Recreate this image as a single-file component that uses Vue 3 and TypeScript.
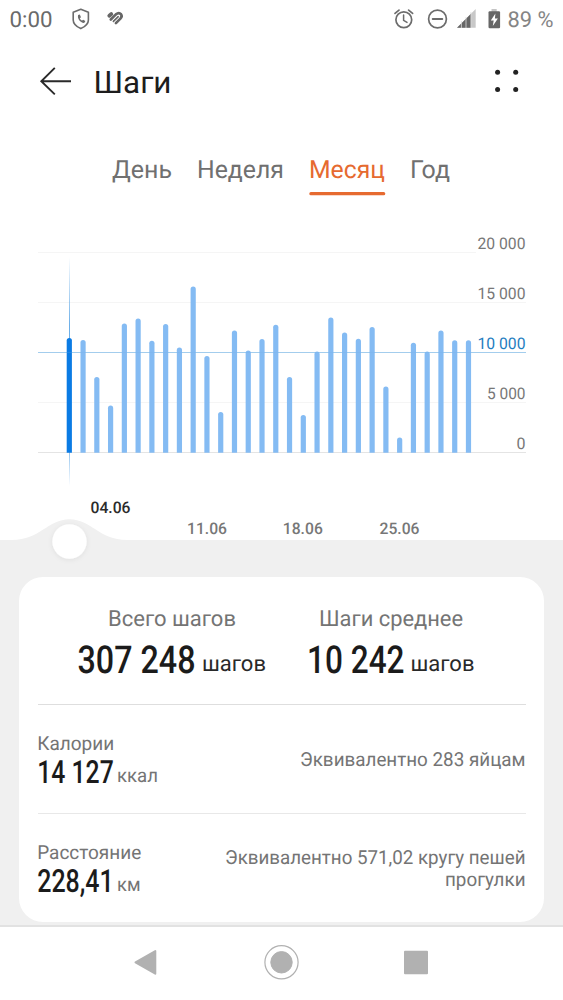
<script setup lang="ts">
interface Tab {
  label: string
  x: number
  width: number
  active?: boolean
}

const tabs: Tab[] = [
  { label: 'День', x: 112, width: 60 },
  { label: 'Неделя', x: 197, width: 87 },
  { label: 'Месяц', x: 309, width: 76, active: true },
  { label: 'Год', x: 410, width: 40 },
]

const steps: number[] = [
  11450, 11250, 7550, 4680, 12900, 13400, 11170, 12840, 10480, 16600,
  9650, 4050, 12200, 10200, 11330, 12770, 7550, 3750, 10080, 13500,
  12000, 11370, 12550, 6580, 1500, 10970, 10080, 12200, 11210, 11210,
]

const baseY = 452.4
const yFor = (value: number): number => baseY - value / 100
const barX = (index: number): number => 69.3 + index * 13.765

const axis = [
  { value: 20000, label: '20 000', width: 48 },
  { value: 15000, label: '15 000', width: 48 },
  { value: 10000, label: '10 000', width: 48, goal: true },
  { value: 5000, label: '5 000', width: 38.5 },
  { value: 0, label: '0', width: 9 },
]

const dates = [
  { label: '11.06', x: 207 },
  { label: '18.06', x: 302.8 },
  { label: '25.06', x: 399.5 },
]

const totals = [
  { title: 'Всего шагов', titleX: 108, titleWidth: 128, value: '307 248', x: 77.5, width: 118, unitX: 202, unitWidth: 64 },
  { title: 'Шаги среднее', titleX: 319, titleWidth: 144, value: '10 242', x: 307, width: 97.5, unitX: 410.5, unitWidth: 64 },
]

const details = [
  { title: 'Калории', titleWidth: 77, value: '14 127', unit: 'ккал', unitWidth: 41, note: [{ text: 'Эквивалентно 283 яйцам', width: 225.5 }] },
  {
    title: 'Расстояние',
    titleWidth: 104,
    value: '228,41',
    unit: 'км',
    unitWidth: 23.5,
    note: [
      { text: 'Эквивалентно 571,02 кругу пешей', width: 300.5 },
      { text: 'прогулки', width: 80.5 },
    ],
  },
]

// Horizontal condensing of the large figures
const totalScale = 0.84
const detailScale = 0.78
</script>

<template>
  <main class="screen">
    <section class="top">
      <div class="status">
        <svg width="563" height="38" viewBox="0 0 563 38">
          <text class="clock" x="9.5" y="27" textLength="43" lengthAdjust="spacingAndGlyphs">0:00</text>
          <path d="M80.8 9.2 L88.4 12.2 V20 C88.4 24 85 26.7 80.8 28.6 C76.6 26.7 73.2 24 73.2 20 V12.2 Z" fill="none" stroke="#6c6c6c" stroke-width="1.6" stroke-linejoin="round" />
          <path d="M78.1 15.1 l1.7 -.5 l1.2 2.6 l-1.2 1 c.5 1.2 1.2 1.9 2.3 2.4 l1.1 -.9 l2.1 1.4 c-.3 1.4 -1 1.9 -2 1.8 c-3.4 -.5 -6.1 -4.3 -5.2 -7.8 z" fill="#6c6c6c" />
          <g fill="none" stroke="#666" stroke-linecap="round" stroke-linejoin="round">
            <path d="M109.3 15.7 L111.3 14.1" stroke-width="3.8" />
            <path d="M110.8 19.5 L115.9 14.4 Q118.9 12 121 14.2 Q122.5 16.2 120.6 18.2 L115.9 23" stroke-width="2.7" />
            <path d="M113.5 21.3 L118.1 16.8" stroke-width="1.9" />
            <path d="M112.4 20.7 L117.4 15.8" stroke="#fff" stroke-width=".8" />
            <path d="M114.3 22.3 L119.3 17.4" stroke="#fff" stroke-width=".8" />
          </g>
          <g fill="none" stroke="#6c6c6c" stroke-width="1.7" stroke-linecap="round">
            <circle cx="403.8" cy="19.8" r="7.9" />
            <path d="M403.6 15 V20.3 L407 22.4" stroke-width="1.5" />
            <path d="M395 13.4 L399 10.1 M412.6 13.4 L408.6 10.1" />
            <circle cx="437.5" cy="19" r="8.9" />
            <path d="M432.7 19 H442.3" stroke-width="1.9" />
          </g>
          <path d="M457 27.7 L475.7 9 V27.7 Z" fill="#c8c8c8" />
          <path d="M457 27.7 L471 13.7 V27.7 Z" fill="#666" />
          <path d="M461.4 21 V28 M466 17 V28 M470.9 12 V28" stroke="#ddd" stroke-width=".8" />
          <path d="M491.5 9 H496.7 V12 H491.5 Z" fill="#c4c4c4" />
          <rect x="488.5" y="11.2" width="11.6" height="17" rx="1.2" fill="#666" />
          <path d="M495.4 13.4 L490.8 20.6 H493.7 L492.8 26 L497.9 18.6 H494.9 Z" fill="#fff" />
          <text class="clock battery" x="507.5" y="27" textLength="46" lengthAdjust="spacingAndGlyphs">89 %</text>
        </svg>
      </div>

      <header class="header">
        <svg width="563" height="90" viewBox="0 38 563 90">
          <path d="M71 81.3 H41.5 M54.8 67.9 L41.3 81.3 L54.8 94.4" fill="none" stroke="#2a2a2a" stroke-width="1.9" />
          <text class="title" x="93.5" y="93" textLength="78" lengthAdjust="spacingAndGlyphs">Шаги</text>
          <g fill="#222">
            <circle cx="497.6" cy="72.3" r="2.5" />
            <circle cx="515.7" cy="72.3" r="2.5" />
            <circle cx="497.6" cy="89.4" r="2.5" />
            <circle cx="515.7" cy="89.4" r="2.5" />
          </g>
        </svg>
      </header>

      <nav class="tabs">
        <svg width="563" height="97" viewBox="0 128 563 97">
          <g v-for="tab in tabs" :key="tab.label">
            <text class="tab" :class="{ active: tab.active }" :x="tab.x" y="178.3" :textLength="tab.width" lengthAdjust="spacingAndGlyphs">{{ tab.label }}</text>
            <rect v-if="tab.active" class="underline" x="309.3" y="192.1" width="76" height="3.2" rx="1.6" />
          </g>
        </svg>
      </nav>
    </section>

    <section class="chart">
      <svg width="563" height="352" viewBox="0 225 563 352">
        <defs>
          <linearGradient id="cursor" gradientUnits="userSpaceOnUse" x1="0" y1="257" x2="0" y2="486">
            <stop offset="0" stop-color="#5ba6e6" stop-opacity="0" />
            <stop offset=".3" stop-color="#5ba6e6" stop-opacity=".9" />
            <stop offset=".82" stop-color="#5ba6e6" stop-opacity=".8" />
            <stop offset="1" stop-color="#5ba6e6" stop-opacity="0" />
          </linearGradient>
          <filter id="knobShadow" x="-50%" y="-50%" width="200%" height="200%">
            <feDropShadow dx="0" dy="1" stdDeviation="2.5" flood-color="#000" flood-opacity=".07" />
          </filter>
        </defs>
        <rect x="0" y="225" width="563" height="315" fill="#fff" />
        <g v-for="tick in axis" :key="tick.value">
          <rect x="37.5" :y="yFor(tick.value) - 0.4" :width="tick.value === 20000 ? 438 : 488" height="1" :class="tick.goal ? 'goal-line' : tick.value === 0 ? 'base-line' : 'grid-line'" shape-rendering="crispEdges" />
          <text class="tick" :class="{ goal: tick.goal }" :x="525.5 - tick.width" :y="yFor(tick.value) - 3.8" :textLength="tick.width" lengthAdjust="spacingAndGlyphs">{{ tick.label }}</text>
        </g>
        <rect x="69" y="257" width="1" height="229" fill="url(#cursor)" />
        <path
          v-for="(value, i) in steps"
          :key="i"
          :class="i === 0 ? 'bar selected' : 'bar'"
          :d="`M${barX(i) - 2.6} ${baseY + 0.3} V${yFor(value) + 2.6} a2.6 2.6 0 0 1 5.2 0 V${baseY + 0.3} Z`"
        />
        <rect x="37.5" y="352" width="488" height="1" class="goal-overlay" shape-rendering="crispEdges" />
        <path d="M12 541 V540 C40 540 48 519.3 69.5 519.3 S99 540 127 540 V541 Z" fill="#f0f0f0" />
        <circle cx="69.5" cy="541.5" r="17.2" fill="#fff" filter="url(#knobShadow)" />
        <text class="date current" x="90.5" y="513.3" textLength="40" lengthAdjust="spacingAndGlyphs">04.06</text>
        <text v-for="date in dates" :key="date.label" class="date" :x="date.x - 20" y="533.5" textLength="40" lengthAdjust="spacingAndGlyphs">{{ date.label }}</text>
      </svg>
    </section>

    <article class="card">
      <div class="summary">
        <svg width="488" height="127" viewBox="38 577 488 127">
          <g v-for="total in totals" :key="total.title">
            <text class="caption" :x="total.titleX" y="626.3" :textLength="total.titleWidth" lengthAdjust="spacingAndGlyphs">{{ total.title }}</text>
            <text class="value" :transform="`translate(${total.x} 672.8) scale(${totalScale} 1)`" :textLength="total.width / totalScale" lengthAdjust="spacingAndGlyphs">{{ total.value }}</text>
            <text class="unit-dark" :x="total.unitX" y="671" :textLength="total.unitWidth" lengthAdjust="spacingAndGlyphs">шагов</text>
          </g>
        </svg>
      </div>
      <div v-for="detail in details" :key="detail.title" class="detail">
        <svg width="488" height="108" viewBox="0 0 488 108">
          <text class="label" x="-.8" y="45" :textLength="detail.titleWidth" lengthAdjust="spacingAndGlyphs">{{ detail.title }}</text>
          <text class="value small" :transform="`translate(-.8 78) scale(${detailScale} 1)`" :textLength="76.5 / detailScale" lengthAdjust="spacingAndGlyphs">{{ detail.value }}</text>
          <text class="label" x="79" y="77" :textLength="detail.unitWidth" lengthAdjust="spacingAndGlyphs">{{ detail.unit }}</text>
          <text
            v-for="(line, i) in detail.note"
            :key="line.text"
            class="note"
            :x="487.5 - line.width"
            :y="(detail.note.length > 1 ? 50.2 : 61.2) + i * 22"
            :textLength="line.width"
            lengthAdjust="spacingAndGlyphs"
          >{{ line.text }}</text>
        </svg>
      </div>
    </article>

    <footer class="navigation">
      <svg width="563" height="73" viewBox="0 927 563 73">
        <g fill="#b1b1b1" stroke="#b1b1b1" stroke-linejoin="round">
          <path d="M135.5 962.3 L155.3 951 V973.7 Z" stroke-width="2" />
          <circle cx="281.5" cy="962.3" r="10.7" />
          <circle cx="281.5" cy="962.3" r="16.6" fill="none" stroke-width="1.2" />
          <rect x="405" y="951.7" width="22" height="21.6" stroke-width="2" />
        </g>
      </svg>
    </footer>
  </main>
</template>

<style>
body {
  background: #fff;
}
</style>

<style scoped>
.screen {
  display: flex;
  flex-direction: column;
  width: 563px;
  height: 1000px;
  overflow: hidden;
  background: #f0f0f0;
  font-family: Roboto, "Noto Sans", sans-serif;
}

svg {
  display: block;
  overflow: visible;
}

text {
  font-family: Roboto, "Noto Sans", sans-serif;
  text-rendering: geometricPrecision;
}

.top {
  height: 225px;
  background: #fff;
}

.chart {
  height: 352px;
}

.clock {
  font-size: 22px;
  fill: #6a6a6a;
}

.battery {
  fill: #858585;
}

.title {
  font-size: 31px;
  fill: #1d1d1d;
}

.tab {
  font-size: 25px;
  fill: #707070;
}

.tab.active,
.underline {
  fill: #e66a30;
}

.tick {
  font-size: 16px;
  fill: #777;
}

.tick.goal {
  fill: #1e7dbf;
}

.grid-line {
  fill: #f5f5f5;
}

.base-line {
  fill: #e4e4e4;
}

.goal-line {
  fill: #b5d8f0;
}

.goal-overlay {
  fill: #6fabe4;
  opacity: .25;
}

.bar {
  fill: #84bbf3;
}

.bar.selected {
  fill: #0b7be4;
}

.date {
  font-size: 16px;
  font-weight: 500;
  fill: #777;
}

.date.current {
  fill: #2b2b2b;
}

.card {
  box-sizing: border-box;
  width: 525px;
  height: 345px;
  margin-left: 19px;
  padding: 0 18px 0 19px;
  border-radius: 24px;
  background: #fff;
}

.detail {
  border-top: 1px solid #dedede;
}

.detail + .detail {
  border-color: #e8e8e8;
}

.caption {
  font-size: 22px;
  fill: #747474;
}

.value {
  font-size: 38.5px;
  font-weight: 500;
  fill: #1b1b1b;
}

.value.small {
  font-size: 32px;
}

.unit-dark {
  font-size: 22px;
  fill: #292929;
}

.label,
.note {
  font-size: 19.3px;
  fill: #747474;
}

.navigation {
  margin-top: 3px;
  border-top: 2px solid #e2e2e2;
  background: #fff;
}
</style>
